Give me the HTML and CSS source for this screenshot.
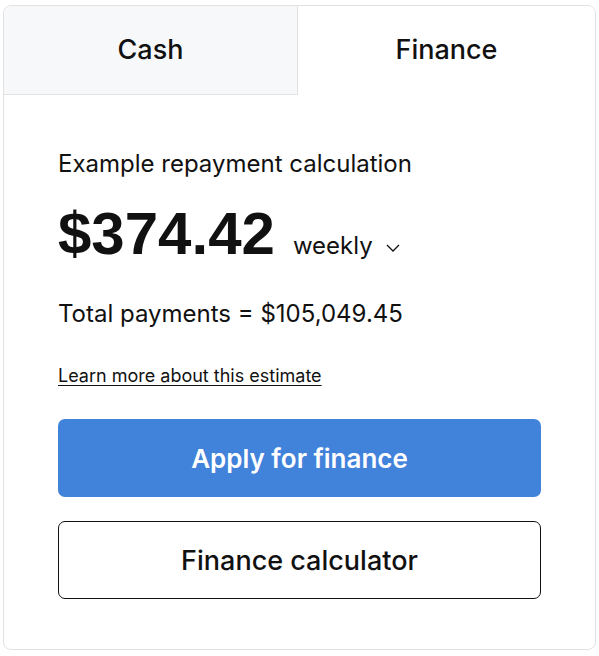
FILE: index.html
```html
<!DOCTYPE html>
<html lang="en">
<head>
<meta charset="utf-8">
<title>Finance</title>
<link rel="stylesheet" href="styles.css">
</head>
<body>
<div class="card">
  <div class="tabs">
    <div class="tab tab-inactive">Cash</div>
    <div class="tab tab-active">Finance</div>
  </div>
  <div class="content">
    <p class="label">Example repayment calculation</p>
    <div class="price-row">
      <span class="price">$374.42</span>
      <span class="freq">weekly<svg class="chev" width="14" height="8" viewBox="0 0 14 8"><path d="M1 1 L7 7 L13 1" fill="none" stroke="#111" stroke-width="1.3"/></svg></span>
    </div>
    <p class="total">Total payments = $105,049.45</p>
    <a class="learn" href="#">Learn more about this estimate</a>
    <button class="btn btn-primary">Apply for finance</button>
    <button class="btn btn-outline">Finance calculator</button>
  </div>
</div>
</body>
</html>
```

FILE: styles.css
```css
html, body {
  margin: 0;
  padding: 0;
  background: #fff;
}
body {
  font-family: Inter, "Noto Sans", sans-serif;
  color: #111;
}
.card {
  margin: 5px 3px 0 3px;
  height: 645px;
  box-sizing: border-box;
  border: 1px solid #e2e2e2;
  border-radius: 8px;
  overflow: hidden;
}
.tabs {
  display: grid;
  grid-template-columns: 294px 1fr;
  height: 89px;
}
.tab {
  display: flex;
  align-items: center;
  justify-content: center;
  font-size: 27px;
  font-weight: 500;
  padding-bottom: 2px;
}
.tab-inactive {
  background: #f7f8fa;
  border-right: 1px solid #e2e2e2;
  border-bottom: 1px solid #e2e2e2;
}
.tab-active {
  background: #fff;
}
.content {
  padding: 0 54px;
  display: flex;
  flex-direction: column;
}
.label {
  margin: 54px 0 0 0;
  font-size: 24px;
  line-height: 30px;
}
.price-row {
  display: flex;
  align-items: baseline;
  margin-top: 21px;
}
.price {
  font-family: "Liberation Sans", Arial, sans-serif;
  font-size: 60px;
  font-weight: 700;
  line-height: 68px;
}
.freq {
  font-size: 24px;
  line-height: 30px;
  margin-left: 18px;
}
.chev {
  margin-left: 13px;
  vertical-align: 2px;
}
.total {
  margin: 31px 0 0 0;
  font-size: 24px;
  line-height: 30px;
}
.learn {
  margin-top: 36px;
  font-size: 18px;
  line-height: 22px;
  color: #111;
  text-decoration: underline;
  text-decoration-thickness: 1px;
  text-underline-offset: 3px;
  align-self: flex-start;
}
.btn {
  font-family: inherit;
  height: 78px;
  border-radius: 7px;
  cursor: pointer;
}
.btn-primary {
  margin-top: 32px;
  background: #4182db;
  color: #fff;
  border: none;
  font-size: 26px;
  font-weight: 600;
}
.btn-outline {
  margin-top: 24px;
  background: #fff;
  color: #111;
  border: 1.5px solid #111;
  font-size: 27px;
  font-weight: 500;
}
```
